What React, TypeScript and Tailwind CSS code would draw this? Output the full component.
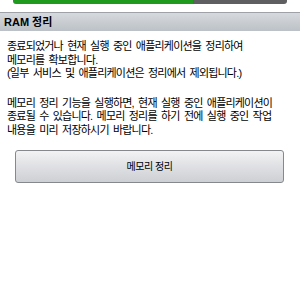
export default function App() {
  return (
    <div
      className="w-[300px] h-[300px] bg-white overflow-hidden text-black"
      style={{ fontFamily: '"Liberation Sans", "Noto Sans CJK KR", sans-serif' }}
    >
      {/* Progress bar */}
      <div className="px-[13px]">
        <div className="flex h-[4px] rounded-b-[3px] overflow-hidden">
          <div className="w-[180px] bg-[#1f9a1f]" />
          <div className="flex-1 bg-[#5f5f62]" />
        </div>
      </div>

      {/* Section header */}
      <div className="mt-[8px] h-[19px] border-t border-[#9ea2a8] bg-gradient-to-b from-[#d6dade] to-[#bcc1c7] flex items-center px-[4px]">
        <span className="text-[11px] font-bold leading-none">RAM 정리</span>
      </div>

      {/* Description */}
      <div className="pt-[9px] pl-[7px] text-[11px] leading-[13.6px] tracking-[-0.8px] [word-spacing:2px] whitespace-nowrap">
        <p>종료되었거나 현재 실행 중인 애플리케이션을 정리하여</p>
        <p>메모리를 확보합니다.</p>
        <p>(일부 서비스 및 애플리케이션은 정리에서 제외됩니다.)</p>
        <p className="mt-[16px]">메모리 정리 기능을 실행하면, 현재 실행 중인 애플리케이션이</p>
        <p>종료될 수 있습니다. 메모리 정리를 하기 전에 실행 중인 작업</p>
        <p>내용을 미리 저장하시기 바랍니다.</p>
      </div>

      {/* Button */}
      <div className="pl-[15px] pr-[16px] mt-[12px]">
        <button className="w-full h-[33px] rounded-[3px] border border-[#85888d] bg-gradient-to-b from-[#f3f3f4] via-[#dfe0e3] to-[#cdd0d4] text-[10px] tracking-[-0.5px]">
          메모리 정리
        </button>
      </div>
    </div>
  );
}
